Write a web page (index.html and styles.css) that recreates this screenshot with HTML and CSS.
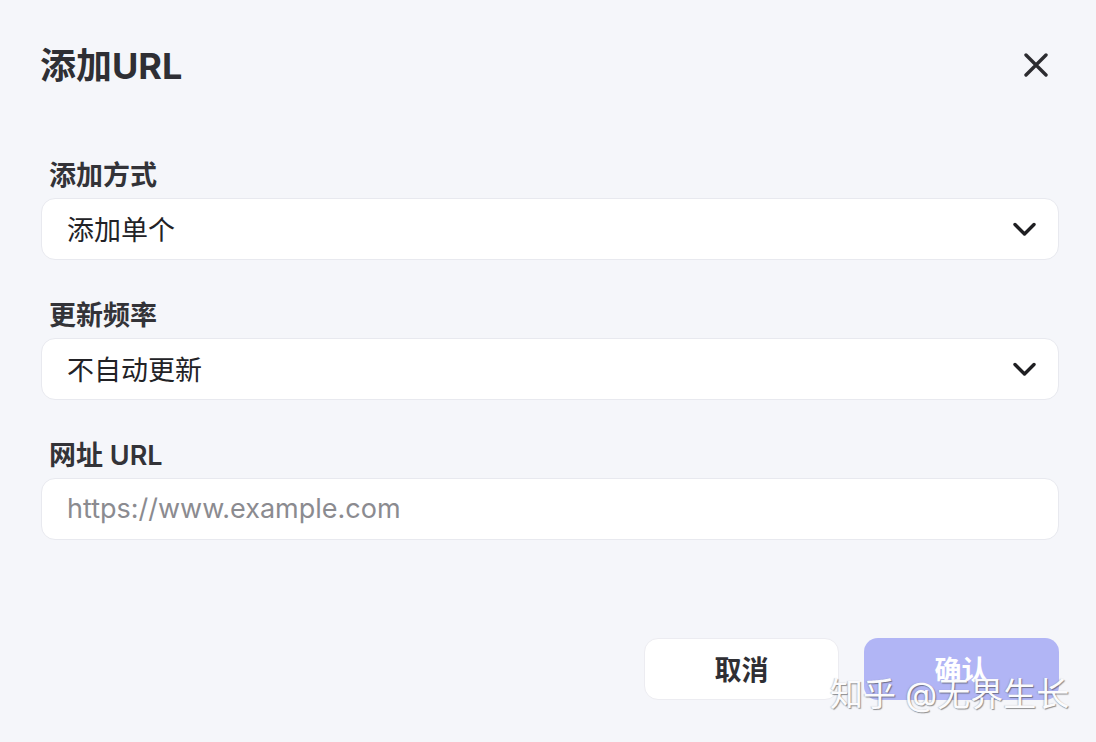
FILE: index.html
```html
<!DOCTYPE html>
<html lang="zh">
<head>
<meta charset="utf-8">
<link rel="stylesheet" href="styles.css">
</head>
<body>
<div class="dialog">
  <div class="header">
    <h1 class="title">添加URL</h1>
    <button class="close" aria-label="关闭">
      <svg width="24" height="24" viewBox="0 0 24 24"><path d="M2 2L22 22M22 2L2 22" stroke="#2c2c30" stroke-width="3.4" stroke-linecap="round" fill="none"/></svg>
    </button>
  </div>
  <div class="form">
    <div class="field">
      <div class="label">添加方式</div>
      <div class="box select">
        <span class="value">添加单个</span>
        <svg class="chev" width="23" height="15" viewBox="0 0 23 15"><path d="M2 2.5L11.5 12L21 2.5" stroke="#1f1f22" stroke-width="3.4" stroke-linecap="round" stroke-linejoin="round" fill="none"/></svg>
      </div>
    </div>
    <div class="field">
      <div class="label">更新频率</div>
      <div class="box select">
        <span class="value">不自动更新</span>
        <svg class="chev" width="23" height="15" viewBox="0 0 23 15"><path d="M2 2.5L11.5 12L21 2.5" stroke="#1f1f22" stroke-width="3.4" stroke-linecap="round" stroke-linejoin="round" fill="none"/></svg>
      </div>
    </div>
    <div class="field">
      <div class="label">网址 URL</div>
      <div class="box">
        <span class="placeholder">https://www.example.com</span>
      </div>
    </div>
  </div>
  <div class="actions">
    <button class="btn cancel">取消</button>
    <button class="btn confirm">确认</button>
  </div>
  <div class="watermark">知乎 @无界生长</div>
</div>
</body>
</html>
```

FILE: styles.css
```css
* { box-sizing: border-box; }
html, body {
  margin: 0;
  padding: 0;
  background: #f5f6fa;
}
body {
  font-family: "Inter", "Noto Sans CJK SC", sans-serif;
  color: #333338;
}
.dialog {
  position: relative;
  width: 1096px;
  height: 742px;
  padding: 42px 37px 0 40px;
}
.header {
  display: flex;
  align-items: center;
  justify-content: space-between;
  height: 48px;
}
.title {
  margin: 0;
  font-size: 36px;
  font-weight: 700;
  line-height: 48px;
  color: #2f2f34;
  letter-spacing: 0;
}
.close {
  border: none;
  background: none;
  padding: 0;
  width: 24px;
  height: 24px;
  margin-right: 11px;
  margin-top: -2px;
  display: flex;
}
.form {
  margin-top: 68px;
  margin-left: 1px;
  display: flex;
  flex-direction: column;
  gap: 38px;
}
.field {
  display: flex;
  flex-direction: column;
  gap: 4px;
}
.label {
  padding-left: 8px;
  font-size: 27px;
  font-weight: 600;
  line-height: 36px;
  color: #333338;
}
.box {
  height: 62px;
  background: #fff;
  border: 1px solid #e8e9ef;
  border-radius: 14px;
  display: flex;
  align-items: center;
  padding: 0 22px 2px 25px;
}
.select {
  justify-content: space-between;
}
.value {
  font-size: 27px;
  color: #222226;
}
.placeholder {
  font-size: 27px;
  color: #8b8b90;
}
.chev {
  display: block;
  margin-top: 2px;
}
.actions {
  margin-top: 98px;
  display: flex;
  justify-content: flex-end;
  gap: 25px;
}
.btn {
  width: 195px;
  height: 62px;
  border-radius: 14px;
  font-family: "Inter", "Noto Sans CJK SC", sans-serif;
  font-size: 27px;
  font-weight: 700;
  padding: 0 0 2px;
}
.cancel {
  background: #fff;
  border: 1px solid #ececf1;
  color: #2f2f34;
}
.confirm {
  background: #b1b5f5;
  border: none;
  color: #fff;
}
.watermark {
  position: absolute;
  left: 830px;
  top: 672px;
  font-size: 33px;
  line-height: 44px;
  color: #fbfbfd;
  text-shadow: 1px 1px 1px rgba(60,60,60,0.55), -1px 0 1px rgba(120,120,120,0.35);
  white-space: nowrap;
}
```
